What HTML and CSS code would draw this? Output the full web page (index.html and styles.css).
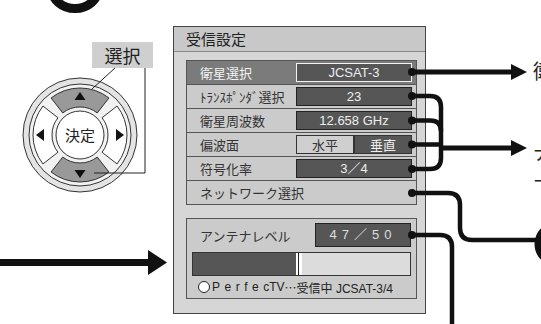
FILE: index.html
```html
<!DOCTYPE html>
<html lang="ja">
<head>
    <meta charset="UTF-8">
    <meta name="viewport" content="width=device-width, initial-scale=1.0">
    <title>受信設定</title>
    <link rel="stylesheet" href="styles.css">
</head>
<body>
<div class="sheet">
    <div class="remote">
        <div class="select-tag">選択</div>
        <svg class="pad" width="120" height="120" viewBox="0 0 120 120">
            <circle cx="60" cy="60" r="57" fill="#e4e4e4" stroke="#333" stroke-width="1"/>
            <circle cx="60" cy="60" r="51" fill="#f2f2f2" stroke="#333" stroke-width="1"/>
            <path class="seg dark" d="M31.06 22.96 A47 47 0 0 1 88.94 22.96 L77.24 37.94 A28 28 0 0 0 42.76 37.94 Z"/>
            <path class="seg dark" transform="rotate(180 60 60)" d="M31.06 22.96 A47 47 0 0 1 88.94 22.96 L77.24 37.94 A28 28 0 0 0 42.76 37.94 Z"/>
            <path class="seg" transform="rotate(-90 60 60)" d="M31.06 22.96 A47 47 0 0 1 88.94 22.96 L77.24 37.94 A28 28 0 0 0 42.76 37.94 Z"/>
            <path class="seg" transform="rotate(90 60 60)" d="M31.06 22.96 A47 47 0 0 1 88.94 22.96 L77.24 37.94 A28 28 0 0 0 42.76 37.94 Z"/>
            <circle cx="60" cy="60" r="24" fill="#fff" stroke="#333" stroke-width="1"/>
            <text x="60" y="65.5" text-anchor="middle" class="pad-label">決定</text>
            <polygon points="54.5,25 65.5,25 60,17" fill="#111"/>
            <polygon points="54.5,95 65.5,95 60,103" fill="#111"/>
            <polygon points="16,60 24,54 24,66" fill="#111"/>
            <polygon points="104,60 96,54 96,66" fill="#111"/>
        </svg>
    </div>

    <div class="panel">
        <div class="panel-title">受信設定</div>
        <div class="group settings">
            <div class="row active"><span class="label">衛星選択</span><span class="value">JCSAT-3</span></div>
            <div class="row"><span class="label">ﾄﾗﾝｽﾎﾟﾝﾀﾞ選択</span><span class="value">23</span></div>
            <div class="row"><span class="label">衛星周波数</span><span class="value">12.658 GHz</span></div>
            <div class="row">
                <span class="label">偏波面</span>
                <span class="pol"><span class="pol-off">水平</span><span class="pol-on">垂直</span></span>
            </div>
            <div class="row"><span class="label">符号化率</span><span class="value">3／4</span></div>
            <div class="row"><span class="label">ネットワーク選択</span></div>
        </div>
        <div class="group antenna">
            <div class="level-head">
                <span class="label">アンテナレベル</span>
                <span class="level-val">47／50</span>
            </div>
            <div class="meter">
                <div class="meter-fill"></div>
                <div class="meter-mark"></div>
            </div>
            <div class="status"><span class="ring"></span><span class="spaced">Perfe</span>cTV<span class="dots">…</span>受信中 JCSAT-3/4</div>
        </div>
    </div>

    <div class="notes">
        <p class="note-1">衛星を選ぶ</p>
        <p class="note-2">「JCSAT-3」</p>
        <p class="note-3">ナビ設定</p>
        <p class="note-4">ー</p>
    </div>

    <!-- leader lines and arrows drawn over the page -->
    <svg class="leaders" width="541" height="324" viewBox="0 0 541 324">
        <ellipse cx="75" cy="-12" rx="23.5" ry="20.5" fill="none" stroke="#111" stroke-width="9"/>
        <path d="M115 68 L92 89" stroke="#222" stroke-width="1" fill="none"/>
        <path d="M145 68 V173 H94" stroke="#222" stroke-width="1" fill="none"/>

        <rect x="0" y="259" width="150" height="7" fill="#111"/>
        <polygon points="148,250 167,262.5 148,275" fill="#111"/>

        <g fill="none" stroke="#111" stroke-width="4.5">
            <path d="M412 72 H514" stroke-width="5"/>
            <path d="M412 96 H430 Q441 96 441 107 V158 Q441 169 430 169 H412"/>
            <path d="M412 120.5 H430 Q441 120.5 441 131"/>
            <path d="M412 144.5 H441"/>
            <path d="M441 148 H514" stroke-width="5"/>
            <path d="M412 193 H448 Q460 193 460 205 V228 Q460 240 472 240 H540"/>
            <path d="M412 235 H440 Q452 235 452 247 V330"/>
        </g>
        <polygon points="511,64 527,72 511,80" fill="#111"/>
        <polygon points="511,140 527,148 511,156" fill="#111"/>

        <g fill="#111">
            <circle cx="412" cy="72" r="4"/>
            <circle cx="412" cy="96" r="4"/>
            <circle cx="412" cy="120.5" r="4"/>
            <circle cx="412" cy="144.5" r="4"/>
            <circle cx="412" cy="169" r="4"/>
            <circle cx="412" cy="193" r="4"/>
            <circle cx="412" cy="235" r="4"/>
        </g>
        <circle cx="557" cy="244" r="19" fill="#fff" stroke="#111" stroke-width="7"/>
    </svg>
</div>
</body>
</html>
```

FILE: styles.css
```css
body {
    margin: 0;
    background: #fff;
    font-family: "Noto Sans CJK JP", sans-serif;
    color: #222;
}
.sheet {
    position: relative;
    display: flex;
    width: 541px;
    height: 324px;
    overflow: hidden;
}
.remote {
    flex: none;
    width: 173px;
}
.select-tag {
    margin: 42px 0 0 92px;
    width: 61px;
    height: 26px;
    background: #cfcfcf;
    font-size: 18px;
    line-height: 26px;
    text-align: center;
}
.pad {
    display: block;
    margin: 7px 0 0 20px;
}
.pad .seg {
    fill: #fff;
    stroke: #333;
    stroke-width: 1;
    stroke-linejoin: round;
}
.pad .seg.dark {
    fill: #999;
}
.pad-label {
    font-family: "Noto Sans CJK JP", sans-serif;
    font-size: 15px;
    fill: #222;
}

/* settings panel */
.panel {
    flex: none;
    width: 251px;
    height: 286px;
    margin-top: 26px;
    border: 1px solid #444;
    background: #d6d6d6;
}
.panel-title {
    height: 24px;
    padding-left: 12px;
    border-bottom: 1px solid #8a8a8a;
    background: #c8c8c8;
    font-size: 15px;
    line-height: 24px;
}
.group {
    margin: 8px 8px 0 12px;
    border: 1px solid #555;
    background: #cbcbcb;
}
.row {
    display: flex;
    align-items: center;
    height: 23px;
    padding: 0 4px 0 13px;
    border-bottom: 1px solid #555;
}
.row:last-child {
    border-bottom: none;
}
.row .label {
    flex: 1;
    font-size: 13px;
    color: #333;
}
.row.active {
    background: #7b7b7b;
}
.row.active .label {
    color: #f2f2f2;
}
.value {
    width: 114px;
    height: 17px;
    border: 1px solid #222;
    background: #565656;
    color: #eee;
    font-family: "Liberation Sans", "Noto Sans CJK JP", sans-serif;
    font-size: 13px;
    line-height: 17px;
    text-align: center;
}
.row.active .value {
    border-color: #f4f4f4;
}
.pol {
    display: flex;
    width: 116px;
    height: 19px;
}
.pol span {
    flex: 1;
    border: 1px solid #333;
    font-size: 13px;
    line-height: 17px;
    text-align: center;
}
.pol-off {
    background: #cfcfcf;
    color: #333;
}
.pol-on {
    background: #565656;
    color: #eee;
}

/* antenna level */
.group.antenna {
    margin-top: 13px;
    height: 75px;
    padding: 4px 5px 0 5px;
}
.level-head {
    display: flex;
    align-items: center;
    height: 24px;
}
.level-head .label {
    margin-left: 8px;
    font-size: 13px;
    color: #333;
}
.level-val {
    margin-left: auto;
    width: 94px;
    height: 22px;
    border: 1px solid #222;
    background: #565656;
    color: #ddd;
    font-family: "Liberation Sans", "Noto Sans CJK JP", sans-serif;
    font-size: 13px;
    line-height: 22px;
    letter-spacing: 5px;
    text-align: center;
}
.meter {
    display: flex;
    height: 22px;
    margin-top: 5px;
    border: 1px solid #333;
    background: #dcdcdc;
}
.meter-fill {
    width: 103px;
    background: #565656;
}
.meter-mark {
    width: 1px;
    border-left: 2px solid #fff;
    border-right: 3px solid #fff;
    background: #222;
}
.status {
    display: flex;
    align-items: center;
    height: 22px;
    margin-left: 6px;
    font-family: "Liberation Sans", "Noto Sans CJK JP", sans-serif;
    font-size: 12px;
    white-space: nowrap;
}
.ring {
    width: 10px;
    height: 10px;
    margin-right: 2px;
    border: 1px solid #222;
    border-radius: 50%;
    background: #fff;
}
.spaced {
    letter-spacing: 4.5px;
}
.dots {
    font-family: "Noto Sans CJK JP", sans-serif;
}

/* cut-off explanation text */
.notes {
    flex: none;
    margin-left: 107px;
    font-size: 20px;
    line-height: 24px;
    white-space: nowrap;
}
.notes p {
    margin: 0;
}
.notes .note-1 {
    padding-top: 59px;
}
.notes .note-2 {
    margin-top: 16px;
}
.notes .note-3 {
    margin-top: 19px;
    font-size: 18px;
    line-height: 20px;
}
.notes .note-4 {
    margin-top: 8px;
    font-size: 18px;
    line-height: 20px;
}

.leaders {
    position: absolute;
    top: 0;
    left: 0;
    pointer-events: none;
}
```
